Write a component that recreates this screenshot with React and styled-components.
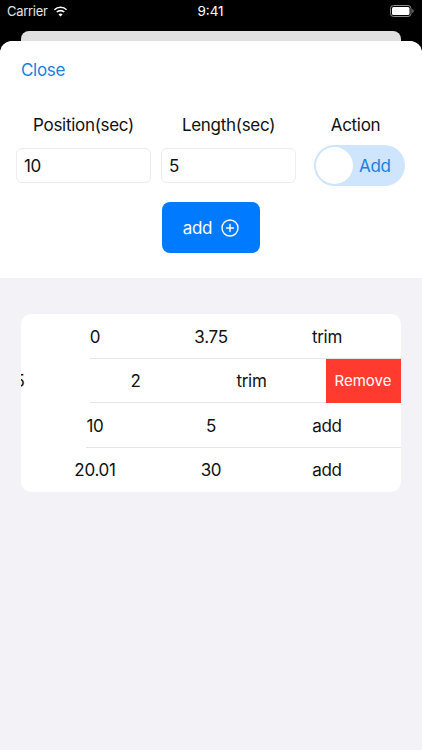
import styled, { createGlobalStyle } from 'styled-components';

const GlobalStyle = createGlobalStyle`
	html, body {
		margin: 0;
		padding: 0;
		background: #000;
	}
	body {
		font-family: Inter, 'Noto Sans', sans-serif;
		-webkit-font-smoothing: antialiased;
	}
`;

const Screen = styled.div`
	width: 422px;
	height: 750px;
	overflow: hidden;
	background: #000;
	display: flex;
	flex-direction: column;
`;

const StatusBar = styled.header`
	height: 31px;
	flex: none;
	padding: 0 8px 0 7px;
	display: grid;
	grid-template-columns: 1fr auto 1fr;
	align-items: start;
	color: #fff;
	font-size: 13.5px;
	line-height: 22px;
`;

const StatusLeft = styled.div`
	display: flex;
	align-items: center;
	gap: 5px;
	color: #e4e4e4;
	font-size: 13px;
	letter-spacing: -0.3px;
`;

const StatusRight = styled.div`
	display: flex;
	justify-content: flex-end;
	padding-top: 5px;
`;

const BackSheet = styled.div`
	height: 10px;
	flex: none;
	margin: 0 21px;
	background: #e0e0e0;
	border-radius: 8px 8px 0 0;
`;

const Page = styled.div`
	flex: 1;
	background: #f2f2f7;
	border-radius: 12px 12px 0 0;
	overflow: hidden;
	letter-spacing: -0.3px;
`;

const Sheet = styled.section`
	height: 237px;
	background: #fff;
	border-radius: 12px 12px 0 0;
	box-sizing: border-box;
	padding: 18px 16px 0;
`;

const CloseLink = styled.a`
	display: block;
	margin-left: 5px;
	font-size: 17px;
	line-height: 22px;
	color: #1a7fe0;
`;

const Form = styled.div`
	margin-top: 33px;
	display: grid;
	grid-template-columns: 135px 135px 91px;
	column-gap: 10px;
	grid-template-rows: 22px 41px;
	row-gap: 9px;
`;

const FieldLabel = styled.div`
	font-size: 17px;
	line-height: 22px;
	text-align: center;
	color: #111;
	margin-left: ${(props) => props.$shift || 0}px;
`;

const Input = styled.div`
	height: 35px;
	align-self: center;
	box-sizing: border-box;
	border: 1px solid #ececf0;
	border-radius: 6px;
	padding-left: 7px;
	font-size: 17px;
	line-height: 35px;
	color: #111;
`;

const Toggle = styled.div`
	margin-left: 8px;
	width: 91px;
	height: 41px;
	box-sizing: border-box;
	border-radius: 21px;
	background: #cfe4fd;
	padding: 2px;
	display: flex;
	align-items: center;
`;

const Knob = styled.span`
	width: 37px;
	height: 37px;
	border-radius: 50%;
	background: #fff;
	flex: none;
`;

const ToggleText = styled.span`
	margin-left: 6px;
	font-size: 17px;
	color: #1a7fe0;
`;

const ButtonRow = styled.div`
	margin-top: 16px;
	display: flex;
	justify-content: center;
`;

const AddButton = styled.button`
	width: 98px;
	height: 51px;
	border: 0;
	border-radius: 8px;
	background: #007aff;
	color: #fff;
	font: inherit;
	font-size: 17px;
	letter-spacing: -0.3px;
	display: flex;
	align-items: center;
	justify-content: center;
	gap: 9px;
	padding: 0;
`;

const ListCard = styled.div`
	margin: 36px 21px 0;
	height: 178px;
	background: #fff;
	border-radius: 10px;
	overflow: hidden;
	display: flex;
	flex-direction: column;
`;

const Row = styled.div`
	height: 44.5px;
	flex: none;
	position: relative;
	display: flex;
	font-size: 17px;
	color: #111;
`;

const Divider = styled.span`
	position: absolute;
	left: ${(props) => props.$inset}px;
	right: 0;
	bottom: 0;
	height: 1px;
	background: #e6e6ea;
`;

const Cells = styled.div`
	flex: 0 0 100%;
	box-sizing: border-box;
	margin-left: ${(props) => (props.$swiped ? -75.5 : 0)}px;
	padding: 1px 16px 0;
	display: grid;
	grid-template-columns: repeat(3, 1fr);
	align-items: center;
	text-align: center;
`;

const RemoveButton = styled.div`
	flex: 0 0 75px;
	position: relative;
	z-index: 1;
	background: #ff3b30;
	color: #fff;
	font-size: 15px;
	letter-spacing: 0;
	display: flex;
	align-items: center;
	justify-content: center;
`;

const rows = [
	{ pos: '0', len: '3.75', action: 'trim', inset: 69 },
	{ pos: '5', len: '2', action: 'trim', inset: 69, swiped: true },
	{ pos: '10', len: '5', action: 'add', inset: 65 },
	{ pos: '20.01', len: '30', action: 'add' },
];

function WifiIcon() {
	return (
		<svg width="15" height="11" viewBox="0 0 15 11" fill="#fff">
			<path d="M7.5 2.1c2.1 0 4 .8 5.5 2.2l1.1-1.1A9.600 9.600 0 0 0 7.500.5 9.600 9.600 0 0 0 .9 3.200L2 4.300a7.900 7.900 0 0 1 5.500-2.200z" />
			<path d="M7.500 5.400c1.200 0 2.300.4 3.200 1.200l1.100-1.100a6.300 6.300 0 0 0-8.600 0l1.100 1.100c.9-.8 2-1.200 3.200-1.200z" />
			<path d="M7.500 10.500l2-2.100a2.900 2.900 0 0 0-4 0z" />
		</svg>
	);
}

function BatteryIcon() {
	return (
		<svg width="24" height="12" viewBox="0 0 24 12">
			<rect x="0.5" y="0.500" width="20.500" height="11" rx="3" fill="none" stroke="#8a8a8a" />
			<rect x="2" y="2" width="17.500" height="8" rx="1.500" fill="#fff" />
			<path d="M22.300 4v4c.8-.3 1.300-1.100 1.300-2s-.5-1.700-1.300-2z" fill="#8a8a8a" />
		</svg>
	);
}

function PlusCircleIcon() {
	return (
		<svg width="18" height="18" viewBox="0 0 18 18" fill="none" stroke="#fff" strokeWidth="1.400" strokeLinecap="round">
			<circle cx="9" cy="9" r="8" />
			<path d="M9 5.500v7M5.500 9h7" />
		</svg>
	);
}

export default function App() {
	return (
		<Screen>
			<GlobalStyle />
			<StatusBar>
				<StatusLeft>
					Carrier
					<WifiIcon />
				</StatusLeft>
				<div>9:41</div>
				<StatusRight>
					<BatteryIcon />
				</StatusRight>
			</StatusBar>
			<BackSheet />
			<Page>
				<Sheet>
					<CloseLink>Close</CloseLink>
					<Form>
						<FieldLabel>Position(sec)</FieldLabel>
						<FieldLabel>Length(sec)</FieldLabel>
						<FieldLabel $shift={8}>Action</FieldLabel>
						<Input>10</Input>
						<Input>5</Input>
						<Toggle>
							<Knob />
							<ToggleText>Add</ToggleText>
						</Toggle>
					</Form>
					<ButtonRow>
						<AddButton>
							add
							<PlusCircleIcon />
						</AddButton>
					</ButtonRow>
				</Sheet>
				<ListCard>
					{rows.map((row) => (
						<Row key={row.pos}>
							<Cells $swiped={row.swiped}>
								<span>{row.pos}</span>
								<span>{row.len}</span>
								<span>{row.action}</span>
							</Cells>
							{row.swiped && <RemoveButton>Remove</RemoveButton>}
							{row.inset && <Divider $inset={row.inset} />}
						</Row>
					))}
				</ListCard>
			</Page>
		</Screen>
	);
}
